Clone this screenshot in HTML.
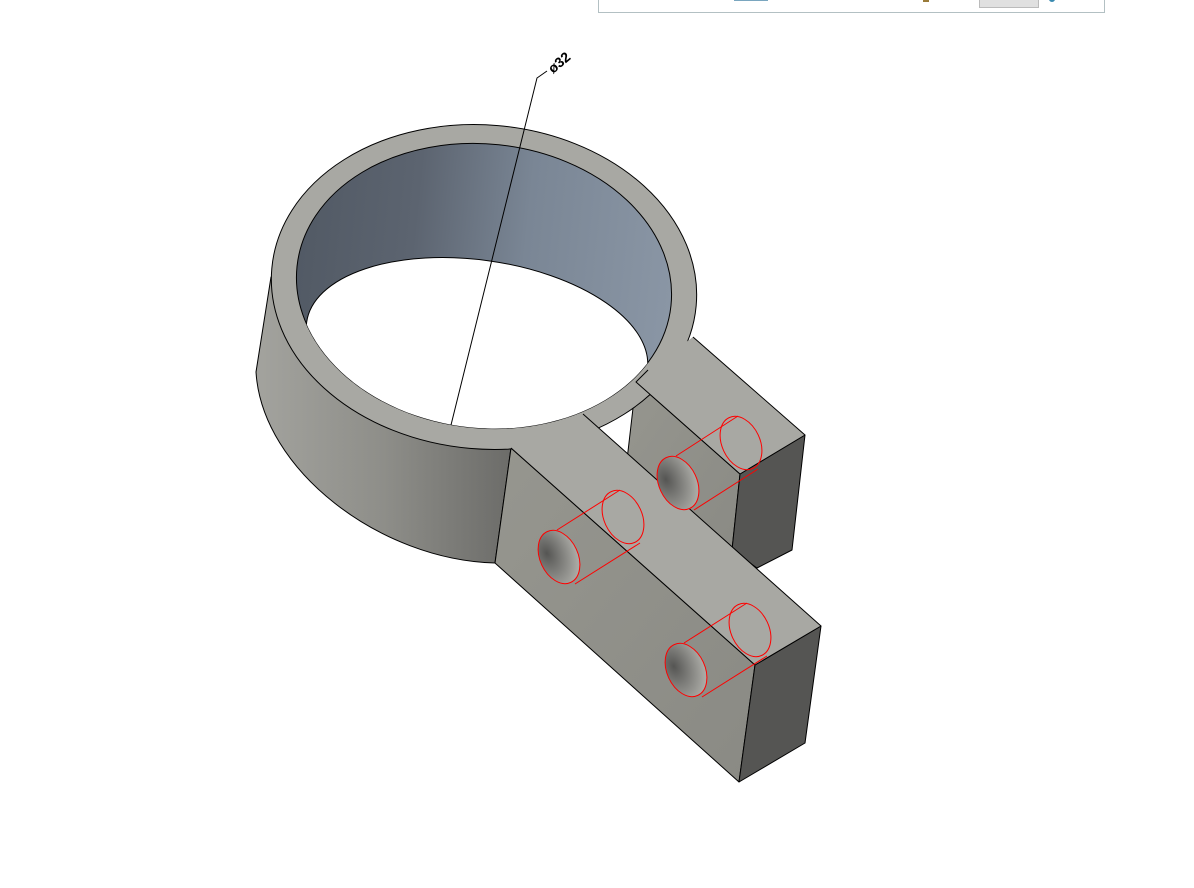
<!DOCTYPE html>
<html><head><meta charset="utf-8"><style>
html,body{margin:0;padding:0;background:#fff;}
body{width:1194px;height:888px;overflow:hidden;position:relative;font-family:"Liberation Sans",sans-serif;}
.tb{position:absolute;left:598px;top:-2px;width:505px;height:13px;border:1px solid #b3c0c3;background:#fff;}
</style></head><body>
<div class="tb">
<div style="position:absolute;left:135px;top:0;width:34px;height:2px;background:#7aa6bf"></div>
<div style="position:absolute;left:380px;top:0;width:58px;height:8px;background:#e0e0e0;border:1px solid #bbb;border-top:none"></div>
<div style="position:absolute;left:324px;top:0;width:6px;height:3px;background:#9a7b3a"></div>
<div style="position:absolute;left:450px;top:0;width:6px;height:3px;background:#3a8ab0;border-radius:0 0 3px 3px"></div>
</div>
<svg width="1194" height="888" style="position:absolute;left:0;top:0">
<defs>
<linearGradient id="wall" x1="0" x2="1" y1="0" y2="0">
<stop offset="0" stop-color="#a3a39e"/><stop offset="0.5" stop-color="#8e8e89"/><stop offset="1" stop-color="#6c6c69"/></linearGradient>
<linearGradient id="inner" x1="0" x2="1" y1="0" y2="0">
<stop offset="0" stop-color="#525a65"/><stop offset="0.3" stop-color="#5c6470"/><stop offset="0.6" stop-color="#7a8695"/><stop offset="1" stop-color="#8a96a5"/></linearGradient>
<linearGradient id="side" x1="0" x2="1" y1="0" y2="1">
<stop offset="0" stop-color="#96968f"/><stop offset="1" stop-color="#8a8a84"/></linearGradient>
<radialGradient id="hole" cx="0.25" cy="0.35" r="0.75">
<stop offset="0" stop-color="#555553"/><stop offset="1" stop-color="#aaaaa5"/></radialGradient>
<clipPath id="ci"><ellipse cx="484" cy="286" rx="188" ry="142" transform="rotate(6 484 286)"/></clipPath>
</defs>
<g stroke="#000" stroke-width="1" stroke-linejoin="round">
<!-- back tab -->
<polygon points="636,382 740,474 732,550 627,460" fill="url(#side)"/>
<polygon points="740,474 805,435 792,550 757,568 732,550" fill="#555553"/>
<!-- ring wall -->
<path d="M271,277 L256,372 C262,470 380,560 495,563 L511,448 L484,287 Z" fill="url(#wall)"/>
<!-- main tab side faces -->
<polygon points="511,448 755,665 739,782 495,563" fill="url(#side)"/>
<polygon points="755,665 821,626 805,743 739,782" fill="#555553"/>
<!-- ring top -->
<ellipse cx="484" cy="287" rx="213" ry="162" transform="rotate(5 484 287)" fill="#a8a8a3"/>
<ellipse cx="484" cy="286" rx="188" ry="142" transform="rotate(6 484 286)" fill="url(#inner)"/>
<g clip-path="url(#ci)"><ellipse cx="477" cy="346" rx="172" ry="86" transform="rotate(8 477 346)" fill="#fff"/></g>
<polygon points="648,370 693,337 805,435 740,474 636,382" fill="#a8a8a3" stroke="none"/>
<polyline points="693,337 805,435 740,474 636,382 648,370" fill="none"/>
<polygon points="511,448 583,414 821,626 755,665" fill="#a8a8a3" stroke="none"/>
<polyline points="583,414 821,626 755,665 511,448" fill="none"/>
</g>
<!-- holes -->
<g stroke="#f00" stroke-width="1" fill="none">
<ellipse cx="559" cy="557" rx="19" ry="28" transform="rotate(-25 559 557)" fill="url(#hole)"/>
<ellipse cx="623" cy="517" rx="19" ry="28" transform="rotate(-25 623 517)"/>
<line x1="557" y1="530" x2="620" y2="490"/><line x1="575" y1="584" x2="640" y2="543"/>
<ellipse cx="686" cy="670" rx="19" ry="28" transform="rotate(-25 686 670)" fill="url(#hole)"/>
<ellipse cx="750" cy="630" rx="19" ry="28" transform="rotate(-25 750 630)"/>
<line x1="684" y1="643" x2="747" y2="603"/><line x1="702" y1="697" x2="767" y2="656"/>
<ellipse cx="678" cy="483" rx="19" ry="28" transform="rotate(-25 678 483)" fill="url(#hole)"/>
<ellipse cx="741" cy="443" rx="19" ry="28" transform="rotate(-25 741 443)"/>
<line x1="676" y1="456" x2="738" y2="416"/><line x1="694" y1="510" x2="758" y2="469"/>
</g>
<!-- dimension -->
<polyline points="451,425 537,78 547,71" fill="none" stroke="#000" stroke-width="1"/>
<text x="553" y="74" font-family="Liberation Sans,sans-serif" font-size="14" font-weight="bold" transform="rotate(-40 553 74)" fill="#000">ø32</text>
</svg>
</body></html>
